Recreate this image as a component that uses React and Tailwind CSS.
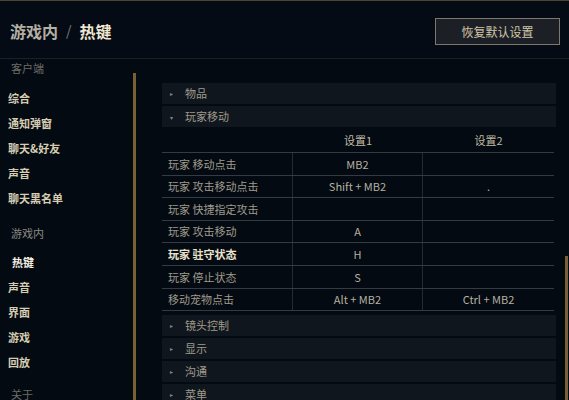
import React from 'react';

const font = { fontFamily: '"Noto Sans CJK SC", "Noto Sans", sans-serif' };

const clientItems = ['综合', '通知弹窗', '聊天&好友', '声音', '聊天黑名单'];
const gameItems = ['声音', '界面', '游戏', '回放'];

const rows = [
  { label: '玩家 移动点击', a: 'MB2', b: '' },
  { label: '玩家 攻击移动点击', a: 'Shift + MB2', b: '.' },
  { label: '玩家 快捷指定攻击', a: '', b: '' },
  { label: '玩家 攻击移动', a: 'A', b: '' },
  { label: '玩家 驻守状态', a: 'H', b: '', bold: true },
  { label: '玩家 停止状态', a: 'S', b: '' },
  { label: '移动宠物点击', a: 'Alt + MB2', b: 'Ctrl + MB2' },
];

const Section = ({ title, open }) => (
  <div className="h-[21px] bg-[#10161e] flex items-center shrink-0">
    <span className={`w-[23px] pl-[8px] text-[6px] text-[#8a8678] ${open ? 'pt-[1px]' : ''}`}>
      {open ? '▾' : '▸'}
    </span>
    <span className="text-[11px] text-[#a09b8c]">{title}</span>
  </div>
);

const SideItem = ({ children }) => (
  <div className="h-[25px] flex items-center text-[11px] font-bold text-[#d6cdb3]">{children}</div>
);

export default function App() {
  return (
    <div className="w-[569px] h-[400px] bg-[#030a12] overflow-hidden flex flex-col" style={font}>
      <div className="h-[59px] shrink-0 border-t border-[#4a4432] border-b border-b-[#1b2028] bg-[#050b14] flex items-center justify-between pl-[10px] pr-[9px]">
        <div className="flex items-center text-[16px] font-bold pt-[2px]">
          <span className="text-[#b4b0a4]">游戏内</span>
          <span className="text-[#7d7b74] mx-[8px] font-normal text-[14px]">/</span>
          <span className="text-[#f0e6d2]">热键</span>
        </div>
        <div className="w-[125px] h-[27px] border border-[#7d786a] bg-[#1c2026] flex items-center justify-center text-[12px] text-[#cfc6a8] mt-[4px]">
          恢复默认设置
        </div>
      </div>

      <div className="flex flex-1 min-h-0">
        <div className="w-[133px] shrink-0 overflow-hidden">
          <div className="-mt-[3px] pl-[8px] flex flex-col">
            <div className="h-[25px] flex items-center pl-[3px] text-[11px] text-[#6e6c66]">客户端</div>
            <div className="h-[5px]" />
            {clientItems.map((t) => (
              <SideItem key={t}>{t}</SideItem>
            ))}
            <div className="h-[10px]" />
            <div className="h-[25px] flex items-center pl-[3px] text-[11px] text-[#8c8a84]">游戏内</div>
            <div className="h-[4px]" />
            <div className="h-[25px] flex items-center pl-[4px] text-[11px] font-bold text-[#f4efe2]">热键</div>
            {gameItems.map((t) => (
              <SideItem key={t}>{t}</SideItem>
            ))}
            <div className="h-[7px]" />
            <div className="h-[25px] flex items-center pl-[3px] text-[11px] text-[#6e6c66]">关于</div>
          </div>
        </div>
        <div className="w-[3px] shrink-0 pt-[14px]">
          <div className="h-full bg-[#7b5f33]" />
        </div>

        <div className="w-[394px] ml-[26px] shrink-0 pt-[24px] flex flex-col gap-[2px]">
          <Section title="物品" />
          <Section title="玩家移动" open />
          <div className="flex flex-col mr-[2px]">
            <div className="h-[24px] flex items-center text-[11px] text-[#c2baa4] border-b border-[#363b43]">
              <div className="w-[131px]" />
              <div className="w-[130px] text-center">设置1</div>
              <div className="flex-1 text-center">设置2</div>
            </div>
            {rows.map((r) => (
              <div key={r.label} className="h-[22.6px] flex items-stretch text-[11px] border-b border-[#363b43]">
                <div className={`w-[131px] flex items-center pl-[6px] border-r border-[#262b32] ${r.bold ? 'font-bold text-[#ece3cd]' : 'text-[#a09b8c]'}`}>
                  {r.label}
                </div>
                <div className="w-[130px] flex items-center justify-center border-r border-[#262b32] text-[#b6b0a0]">{r.a}</div>
                <div className="flex-1 flex items-center justify-center text-[#b6b0a0]">{r.b}</div>
              </div>
            ))}
          </div>
          <div className="h-[3px]" />
          <div className="flex flex-col gap-[2px]">
            <Section title="镜头控制" />
            <Section title="显示" />
            <Section title="沟通" />
            <Section title="菜单" />
          </div>
        </div>

        <div className="flex-1" />
        <div className="w-[3px] shrink-0 pt-[197px] mr-[1px]">
          <div className="h-full bg-[#7a5e34]" />
        </div>
      </div>
    </div>
  );
}
